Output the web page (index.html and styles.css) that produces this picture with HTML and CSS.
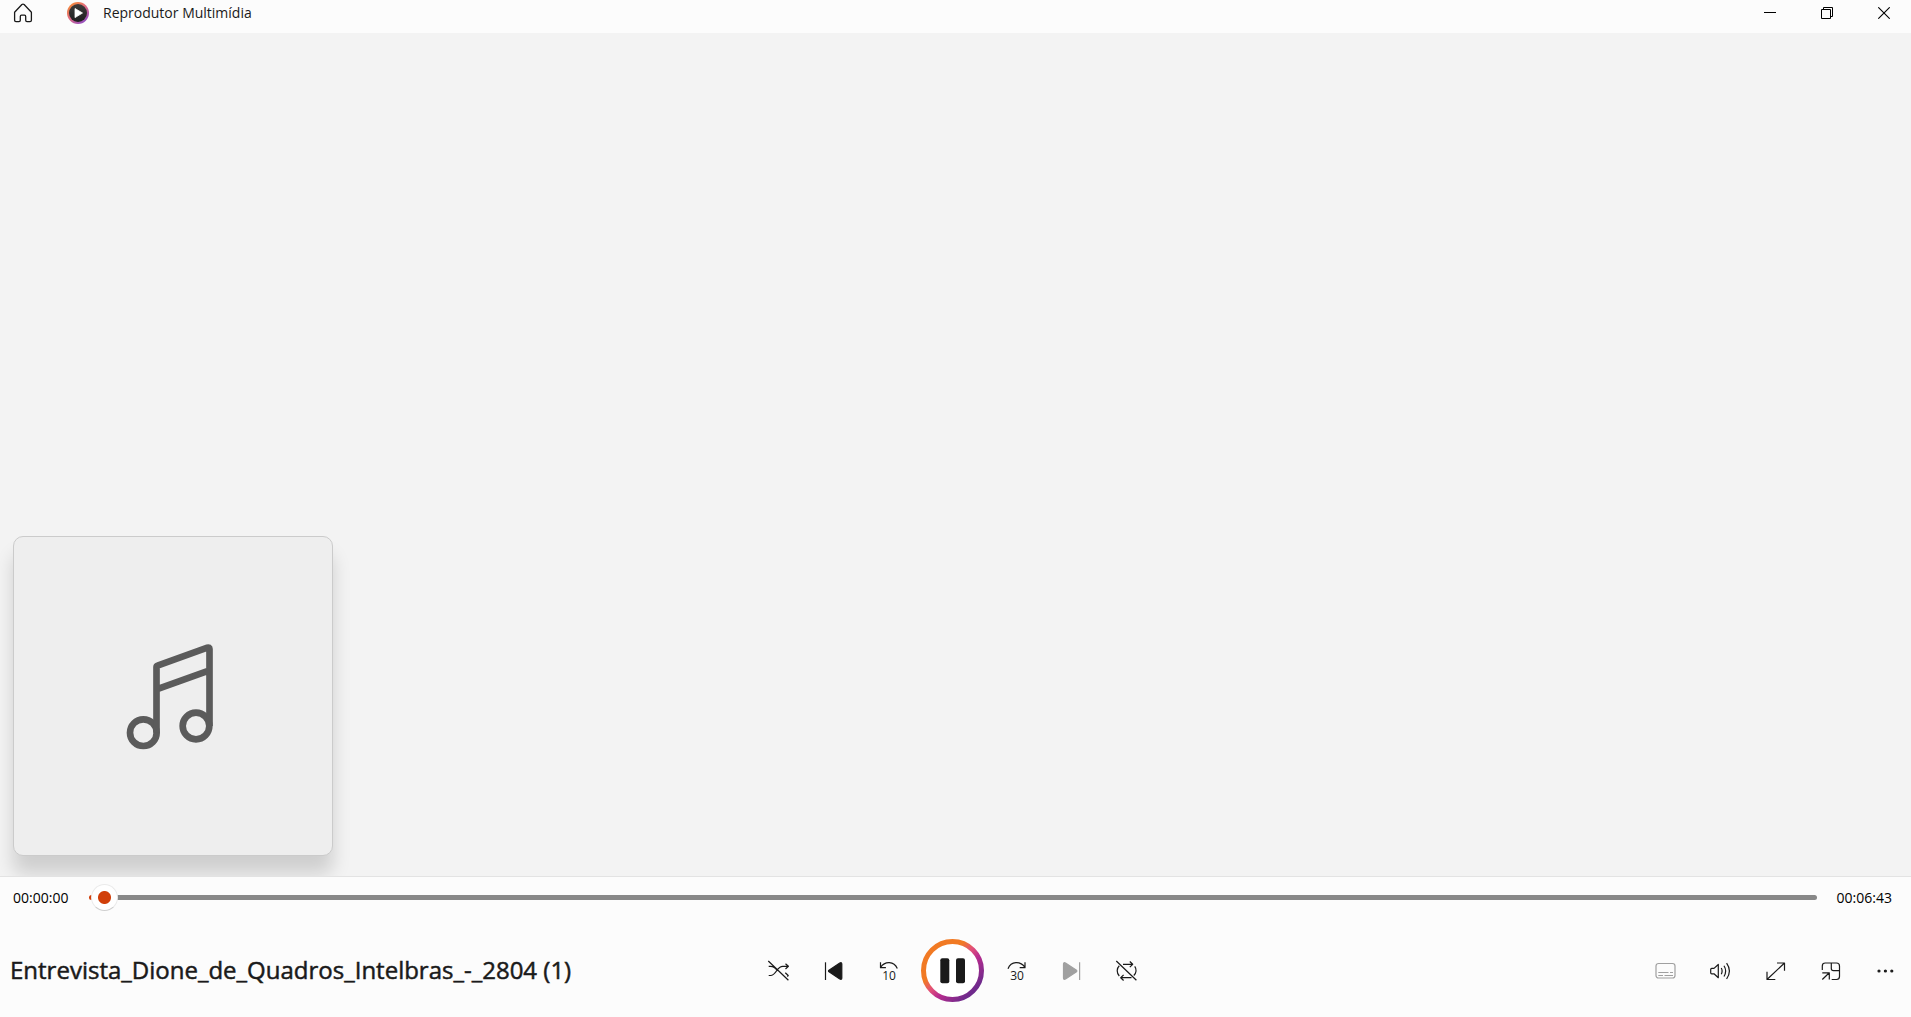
FILE: index.html
```html
<!DOCTYPE html>
<html lang="pt-BR">
<head>
<meta charset="utf-8">
<meta name="viewport" content="width=device-width, initial-scale=1">
<title>Reprodutor Multimídia</title>
<link rel="stylesheet" href="styles.css">
</head>
<body>
<div class="app">
  <header class="titlebar">
    <button class="home" type="button" aria-label="Início">
      <svg width="20" height="20" viewBox="0 0 20 20" fill="none" stroke="#1a1a1a" stroke-width="1.3" stroke-linejoin="round"><path d="M1.6 9.2 8.9 1.500Q10 .6 11.100 1.500L18.400 9.200V17.200Q18.400 18.600 17 18.600H14Q12.700 18.600 12.700 17.200V13.500Q12.700 12.200 11.500 12.200H8.500Q7.300 12.200 7.300 13.500V17.200Q7.300 18.600 6 18.600H3Q1.600 18.600 1.600 17.200Z"/></svg>
    </button>
    <svg class="logo" width="22" height="22" viewBox="0 0 22 22" aria-hidden="true">
      <defs>
        <linearGradient id="logo-ring" x1=".1" y1=".1" x2=".8" y2="1"><stop offset="0" stop-color="#f58a35"/><stop offset=".45" stop-color="#e06a80"/><stop offset="1" stop-color="#8a4bc8"/></linearGradient>
        <linearGradient id="logo-disc" x1="0" y1="0" x2="0" y2="1"><stop offset="0" stop-color="#3c3c3c"/><stop offset="1" stop-color="#1e1e1e"/></linearGradient>
      </defs>
      <circle cx="11" cy="11" r="11" fill="url(#logo-ring)"/>
      <circle cx="11" cy="11" r="9" fill="url(#logo-disc)"/>
      <path d="M8 6.500 15.500 11 8 15.600Z" fill="#fff" stroke="#fff" stroke-width=".8" stroke-linejoin="round"/>
    </svg>
    <h1 class="app-name">Reprodutor Multimídia</h1>
    <div class="window-controls">
      <button type="button" aria-label="Minimizar"><svg width="12" height="12" viewBox="0 0 12 12"><path d="M0 5.500H12" stroke="#000"/></svg></button>
      <button type="button" aria-label="Restaurar"><svg width="12" height="12" viewBox="0 0 12 12" fill="none" stroke="#000"><path d="M.5 2.500H9.500V11.500H.5ZM2.500 2.500V.5H11.500V9.500H9.500"/></svg></button>
      <button type="button" aria-label="Fechar"><svg width="12" height="12" viewBox="0 0 12 12"><path d="M.3.3 11.700 11.700M11.700.3.3 11.700" stroke="#000" stroke-width="1.100"/></svg></button>
    </div>
  </header>

  <main class="stage">
    <div class="cover">
      <svg width="110" height="110" viewBox="354 362 330 330" fill="none" stroke="#5b5b5b" stroke-width="20" aria-hidden="true">
        <circle cx="430" cy="637" r="40"/>
        <circle cx="588" cy="617" r="40"/>
        <path d="M469.500 637V440Q469.500 437 472.500 436L622 382Q628.500 380 628.500 386V617M469.500 507 628.500 450"/>
      </svg>
    </div>
  </main>

  <footer class="player">
    <div class="seek">
      <span class="time elapsed">00:00:00</span>
      <input class="slider" type="range" min="0" max="403" step="any" value="0.5" aria-label="Posição">
      <span class="time total">00:06:43</span>
    </div>
    <div class="controls">
      <h2 class="track-title">Entrevista_Dione_de_Quadros_Intelbras_-_2804 (1)</h2>
      <div class="group transport">
        <button type="button" aria-label="Ordem aleatória">
          <svg class="icon" viewBox="0 0 24 25"><path d="M1.300 3 21.400 22.300M1.700 8.300H3.500C8 8.300 9.500 11.500 10.500 13M1.700 17.500H3.500C9.500 17.500 9.500 8.300 15.800 8.300H21.300M18.500 5.700 21.400 8.300 18.500 11M18.300 14.700 21.200 17.500 20.300 18.500"/></svg>
        </button>
        <button type="button" aria-label="Anterior">
          <svg class="icon" viewBox="0 0 24 25"><path d="M3.500 4.300V22"/><path class="solid" d="M7 12.200 17.800 5Q19.800 4 19.800 6V20Q19.800 22 17.800 21L7 13.800Q6 13 7 12.200Z"/></svg>
        </button>
        <button type="button" aria-label="Retroceder 10 segundos">
          <svg class="icon" viewBox="0 0 24 25"><path d="M3.500 4.300V9.700H8.900M3.500 9.500C8 2.800 17 3 20.300 10.500"/><text x="12" y="22" font-size="12">10</text></svg>
        </button>
        <button class="play" type="button" aria-label="Pausar">
          <svg width="63" height="63" viewBox="0 0 63 63">
            <defs><linearGradient id="ring" x1="0" y1="0" x2="1" y2="1"><stop offset=".35" stop-color="#f17a24"/><stop offset=".48" stop-color="#e2507a"/><stop offset=".6" stop-color="#b92c8e"/><stop offset=".85" stop-color="#6f2a8c"/></linearGradient></defs>
            <circle cx="31.500" cy="31.500" r="29" fill="#fff" stroke="url(#ring)" stroke-width="5"/>
            <rect x="19.300" y="19.300" width="9" height="25" rx="2" fill="#1a1a1a"/><rect x="35" y="19.300" width="9" height="25" rx="2" fill="#1a1a1a"/>
          </svg>
        </button>
        <button type="button" aria-label="Avançar 30 segundos">
          <svg class="icon" viewBox="0 0 24 25"><path d="M20 4.300V9.700H14.700M20 9.500C15.500 2.800 6 3 3 10.700"/><text x="12" y="22" font-size="12">30</text></svg>
        </button>
        <button type="button" aria-label="Próximo" disabled>
          <svg class="icon" viewBox="0 0 24 25"><path d="M19.600 4.300V22"/><path class="solid" d="M16.500 12.200 5.500 5Q3.500 4 3.500 6V20Q3.500 22 5.500 21L16.500 13.800Q17.300 13 16.500 12.200Z"/></svg>
        </button>
        <button type="button" aria-label="Repetir desativado">
          <svg class="icon" viewBox="0 0 24 25"><path d="M1.300 3 21.400 22.300M8 6.300H17.500M14.800 3.500 17.700 6.300 14.800 9.200M19.700 8.400C21.800 11 21.500 15 18.800 17.500M4.300 7.800C1.500 10.500 1.500 15 4.300 18M16.500 19.700H5.900M8.600 16.900 5.700 19.700 8.600 22.500"/></svg>
        </button>
      </div>
      <div class="group extras">
        <button type="button" aria-label="Legendas" disabled>
          <svg class="icon" viewBox="0 0 24 25"><rect x="3" y="5.500" width="19" height="14.500" rx="2.500"/><path d="M5.300 14.500H15.500M17 14.500H20M5.300 17.500H10M11.500 17.500H20"/></svg>
        </button>
        <button type="button" aria-label="Volume">
          <svg class="icon" viewBox="0 0 24 25"><path d="M3.700 10.400H6L10.300 6.500V19.700L6 15.800H3.700Q2.700 15.800 2.700 14.800V11.400Q2.700 10.400 3.700 10.400ZM13.300 10Q14.900 13 13.300 16.200M16 7.700Q19.300 13 16 18.500M18.600 5.200Q24.200 13 18.600 21"/></svg>
        </button>
        <button type="button" aria-label="Tela inteira">
          <svg class="icon" viewBox="0 0 24 25"><path d="M4 21.500 21.500 5M14 5H21.500V12.700M4 13.700V21.500H12.300"/></svg>
        </button>
        <button type="button" aria-label="Miniplayer">
          <svg class="icon" viewBox="0 0 24 25"><path d="M4.300 12V8Q4.300 5 7.300 5H18.500Q21.500 5 21.500 8V18.500Q21.500 21.500 18.500 21.500H13.700M13.300 5V10.500Q13.300 12.600 15.500 12.600H21.500M4.300 21.500 11.300 14.800M4.300 14.800H11.300V21.500"/></svg>
        </button>
        <button type="button" aria-label="Mais opções">
          <svg class="icon" viewBox="0 0 24 25"><g class="solid"><circle cx="6" cy="13" r="1"/><circle cx="12.400" cy="13" r="1"/><circle cx="18.800" cy="13" r="1"/></g></svg>
        </button>
      </div>
    </div>
  </footer>
</div>
</body>
</html>
```
FILE: styles.css
```css
* { box-sizing: border-box; }

body {
  margin: 0;
  color: #1a1a1a;
  background: #fcfcfc;
  font-family: "Segoe UI", "Open Sans", "Noto Sans", sans-serif;
}

button {
  display: flex;
  align-items: center;
  justify-content: center;
  padding: 0;
  border: 0;
  color: inherit;
  background: none;
  font-family: inherit;
}

h1, h2 { margin: 0; }

.app {
  display: flex;
  flex-direction: column;
  min-height: 100vh;
}

/* Title bar */
.titlebar {
  display: flex;
  align-items: center;
  height: 33px;
  padding: 0 4px 7px 0;
}

.home { width: 46px; height: 26px; }

.logo { margin: 0 14px 0 21px; }

.app-name {
  font-size: 14px;
  font-weight: 400;
  line-height: 22px;
}

.window-controls {
  display: flex;
  gap: 11px;
  margin-left: auto;
}

.window-controls button { width: 46px; height: 26px; }

/* Now playing area */
.stage {
  display: flex;
  flex: 1;
  align-items: flex-end;
  padding: 20px 13px;
  overflow: hidden;
  background: #f3f3f3;
}

.cover {
  display: grid;
  place-items: center;
  width: 320px;
  height: 320px;
  border: 1px solid #cbcbcb;
  border-radius: 10px;
  background: #eee;
  box-shadow: 0 18px 18px rgba(0, 0, 0, 0.15);
}

/* Player bar */
.player {
  padding-bottom: 15px;
  border-top: 1px solid #e3e3e3;
}

.seek {
  display: flex;
  align-items: center;
  height: 41px;
  margin-bottom: 21px;
  padding: 0 19px 0 13px;
}

.time {
  color: #000;
  font-size: 14px;
  line-height: 20px;
}

.elapsed { width: 76px; }
.total { margin-left: 20px; }

.slider {
  flex: 1;
  min-width: 0;
  height: 27px;
  margin: 0;
  appearance: none;
  background: none;
}

.slider::-webkit-slider-runnable-track {
  height: 5px;
  border-radius: 3px;
  background: linear-gradient(to right, #d13f0a 14px, #888 14px);
}

.slider::-webkit-slider-thumb {
  width: 27px;
  height: 27px;
  margin-top: -11px;
  appearance: none;
  border: 1px solid #ebebeb;
  border-bottom-color: #cfcfcf;
  border-radius: 50%;
  background: radial-gradient(circle, #d13f0a 6px, #fff 7px);
}

.controls {
  display: grid;
  grid-template-columns: 1fr auto 1fr;
  align-items: center;
  padding-right: 6px;
}

.track-title {
  padding: 0 0 2px 10px;
  font-size: 24px;
  font-weight: 400;
  line-height: 32px;
  white-space: nowrap;
  -webkit-text-stroke: 0.5px currentColor;
}

.group {
  display: flex;
  align-items: center;
  gap: 15px;
}

.group button { width: 40px; height: 40px; }

.group .play {
  width: 63px;
  height: 63px;
  margin: 0 -2px 0 -3px;
}

.group button:disabled { color: #a0a0a0; }

.extras { justify-self: end; }

.icon {
  width: 24px;
  height: 25px;
  fill: none;
  stroke: currentColor;
  stroke-width: 1.2;
  stroke-linejoin: round;
}

.icon .solid { fill: currentColor; }

.icon text {
  fill: currentColor;
  stroke: none;
  font-weight: 500;
  text-anchor: middle;
}
```
